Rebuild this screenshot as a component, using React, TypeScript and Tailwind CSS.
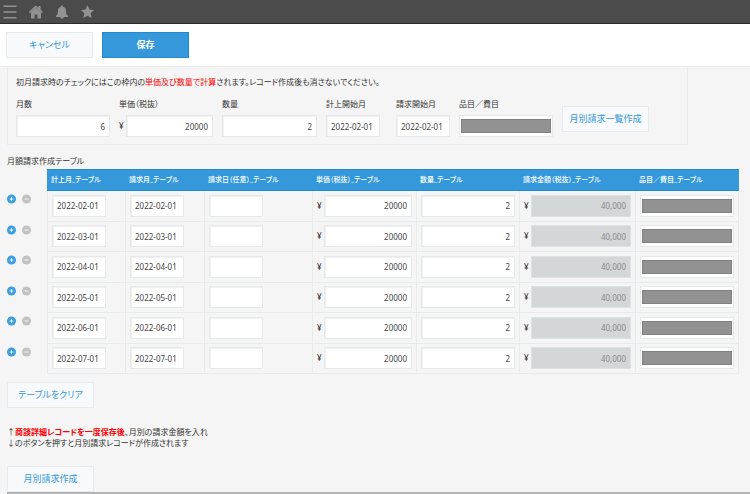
import React from "react";

type RowType = {
  date: string;
  price: string;
  quantity: string;
  amount: string;
};

const rows: RowType[] = [
  { date: "2022-02-01", price: "20000", quantity: "2", amount: "40,000" },
  { date: "2022-03-01", price: "20000", quantity: "2", amount: "40,000" },
  { date: "2022-04-01", price: "20000", quantity: "2", amount: "40,000" },
  { date: "2022-05-01", price: "20000", quantity: "2", amount: "40,000" },
  { date: "2022-06-01", price: "20000", quantity: "2", amount: "40,000" },
  { date: "2022-07-01", price: "20000", quantity: "2", amount: "40,000" },
];

const headers: string[] = [
  "計上月_テーブル",
  "請求月_テーブル",
  "請求日（任意）_テーブル",
  "単価（税抜）_テーブル",
  "数量_テーブル",
  "請求金額（税抜）_テーブル",
  "品目／費目_テーブル",
];

const inputClass =
  "block h-[22px] min-w-0 border border-[#e6e9ea] bg-white text-[8px] text-[#444] shadow-[inset_1px_1px_1px_#f0f0f0]";
const dateClass = `${inputClass} w-[54px] px-1`;
const numberClass = `${inputClass} w-full flex-1 px-1 text-right`;
const buttonClass =
  "h-[26px] w-[87px] shrink-0 border border-[#e6eaee] bg-[#f7f9fa] text-[9px] text-[#3498db] whitespace-nowrap";
const cellClass = "border-l border-b border-[#e8ebec] pl-1 pr-1";

const HiddenValue: React.FC = () => (
  <div className="h-[22px] border border-[#e6e9ea] bg-white px-px py-[3px]">
    <div className="h-[14px] border border-[#808080] bg-[#929292]" />
  </div>
);

const HeaderIcons: React.FC = () => (
  <>
    <button aria-label="メニュー">
      <svg width="14" height="14" viewBox="0 0 14 14" stroke="#929292" strokeWidth="1.5">
        <path d="M0.5 1.2H13.5M0.5 7H13.5M0.5 12.8H13.5" />
      </svg>
    </button>
    <a href="#" aria-label="ホーム">
      <svg width="14" height="14" viewBox="0 0 14 14" fill="#929292">
        <path d="M6.6 0.6L9.4 2.8V1H11.6V4.6L13.4 6.2V8H12V13.6H8.4V9.4H5.6V13.6H2V8H0.4V6.2Z" />
        <path d="M0.8 7.6L6.8 2.9L12.9 7.6" fill="none" stroke="#6a6a6a" strokeWidth="0.5" />
      </svg>
    </a>
    <button aria-label="通知">
      <svg width="14" height="14" viewBox="0 0 14 14" fill="#929292">
        <path d="M7 0.4C7.8 0.4 8.2 1 8.1 1.7C10.3 2.3 11 4 11 6C11 8.7 11.8 9.6 13 10.8V11.9H1V10.8C2.2 9.6 3 8.7 3 6C3 4 3.7 2.3 5.9 1.7C5.8 1 6.2 0.4 7 0.4Z" />
        <path d="M5.2 11.9H8.8C8.5 13.9 5.5 13.9 5.2 11.9Z" />
      </svg>
    </button>
    <button aria-label="お気に入り">
      <svg width="14" height="14" viewBox="0 0 14 14" fill="#929292">
        <path d="M6.5 0.3L8.5 4.6L13 5.1L9.7 8.3L10.6 13L6.5 10.7L2.4 13L3.3 8.3L0 5.1L4.5 4.6Z" />
      </svg>
    </button>
  </>
);

const App: React.FC = () => {
  return (
    <div className="min-h-screen bg-[#f5f5f5] text-[8px] leading-3 text-[#333] font-['Noto_Sans','Noto_Sans_CJK_JP',sans-serif] [font-feature-settings:'palt']">
      <header className="flex h-6 items-center gap-3 border-b border-[#2c2c2c] bg-[#4b4b4b] px-[3px]">
        <HeaderIcons />
      </header>
      <div className="flex h-[43px] items-center gap-[9px] border-b border-[#ececec] bg-white px-[6px]">
        <button className={buttonClass}>キャンセル</button>
        <button className="h-[26px] w-[87px] border border-[#2388cd] bg-[#3498db] text-[9px] font-bold text-white">
          保存
        </button>
      </div>

      <main className="pl-[7px] pr-[11px]">
        <section className="mr-[51px] border-x border-b border-[#e8ebec] px-2 pt-[9px] pb-[7px]">
          <p>
            初月請求時のチェックにはこの枠内の<span className="text-[#ff0000]">単価及び数量で計算</span>
            されます。レコード作成後も消さないでください。
          </p>
          <div className="mt-[10px] flex items-end gap-[9px]">
            <div className="flex w-[94px] flex-col gap-[5px]">
              <label htmlFor="months">月数</label>
              <input id="months" className={`${numberClass} flex-none`} defaultValue="6" />
            </div>
            <div className="flex w-[94px] flex-col gap-[5px]">
              <label htmlFor="price">単価（税抜）</label>
              <div className="flex items-center gap-[2px]">
                <span>¥</span>
                <input id="price" className={numberClass} defaultValue="20000" />
              </div>
            </div>
            <div className="flex w-[95px] flex-col gap-[5px]">
              <label htmlFor="quantity">数量</label>
              <input id="quantity" className={`${numberClass} flex-none`} defaultValue="2" />
            </div>
            <div className="flex w-[61px] flex-col gap-[5px]">
              <label htmlFor="recordStart">計上開始月</label>
              <input id="recordStart" className={dateClass} defaultValue="2022-02-01" />
            </div>
            <div className="flex w-[54px] flex-col gap-[5px]">
              <label htmlFor="billStart">請求開始月</label>
              <input id="billStart" className={dateClass} defaultValue="2022-02-01" />
            </div>
            <div className="flex w-[94px] flex-col gap-[5px]">
              <span>品目／費目</span>
              <HiddenValue />
            </div>
            <button className={`${buttonClass} mb-[5px]`}>月別請求一覧作成</button>
          </div>
        </section>

        <h2 className="mt-[10px]">月額請求作成テーブル</h2>
        <table className="mt-[2px] h-[205px] w-full table-fixed border-separate border-spacing-0">
          <colgroup>
            <col className="w-[40px]" />
            <col className="w-[78px]" />
            <col className="w-[79px]" />
            <col className="w-[108px]" />
            <col className="w-[104px]" />
            <col className="w-[103px]" />
            <col className="w-[116px]" />
            <col className="w-[104px]" />
          </colgroup>
          <thead>
            <tr className="h-[22px]">
              <td />
              {headers.map((header) => (
                <th
                  key={header}
                  className="border-y border-[#2388cd] bg-[#3498db] px-1 text-left text-[7px] font-medium whitespace-nowrap text-white"
                >
                  {header}
                </th>
              ))}
            </tr>
          </thead>
          <tbody>
            {rows.map((row) => (
              <tr key={row.date}>
                <td className="pb-[14px]">
                  <div className="flex gap-[5px]">
                    <button aria-label="行を追加">
                      <svg width="10" height="10" viewBox="0 0 10 10">
                        <circle cx="4.5" cy="5" r="4.5" fill="#3d9ee0" />
                        <path d="M2.7 5H6.3M4.5 3.2V6.8" stroke="#fff" strokeWidth="0.9" />
                      </svg>
                    </button>
                    <button aria-label="行を削除">
                      <svg width="10" height="10" viewBox="0 0 10 10">
                        <circle cx="4.5" cy="5" r="4.5" fill="#c2c2c2" />
                        <path d="M2.7 5H6.3" stroke="#fff" strokeWidth="0.9" />
                      </svg>
                    </button>
                  </div>
                </td>
                <td className={cellClass}>
                  <input aria-label={headers[0]} className={dateClass} defaultValue={row.date} />
                </td>
                <td className={cellClass}>
                  <input aria-label={headers[1]} className={dateClass} defaultValue={row.date} />
                </td>
                <td className={cellClass}>
                  <input aria-label={headers[2]} className={dateClass} />
                </td>
                <td className={cellClass}>
                  <div className="flex items-center gap-[2px]">
                    <span>¥</span>
                    <input aria-label={headers[3]} className={numberClass} defaultValue={row.price} />
                  </div>
                </td>
                <td className={cellClass}>
                  <input aria-label={headers[4]} className={numberClass} defaultValue={row.quantity} />
                </td>
                <td className={cellClass}>
                  <div className="flex items-center gap-[2px]">
                    <span>¥</span>
                    <input
                      aria-label={headers[5]}
                      className="block h-[22px] w-full min-w-0 flex-1 border border-[#dfe2e3] bg-[#d4d7d7] px-1 text-right text-[8px] text-[#888]"
                      defaultValue={row.amount}
                      disabled
                    />
                  </div>
                </td>
                <td className={`${cellClass} border-r`}>
                  <HiddenValue />
                </td>
              </tr>
            ))}
          </tbody>
        </table>

        <button className={`${buttonClass} mt-2 block`}>テーブルをクリア</button>
        <p className="mt-[18px] leading-[11px]">
          ↑<strong className="font-bold text-[#ff0000]">商談詳細レコードを一度保存後</strong>、月別の請求金額を入れ
          <br />
          ↓のボタンを押すと月別請求レコードが作成されます
        </p>
        <button className={`${buttonClass} mt-[18px] block`}>月別請求作成</button>
      </main>
      <div className="ml-[7px] h-[2px] bg-[#b5b5b5]" />
    </div>
  );
};

export default App;
